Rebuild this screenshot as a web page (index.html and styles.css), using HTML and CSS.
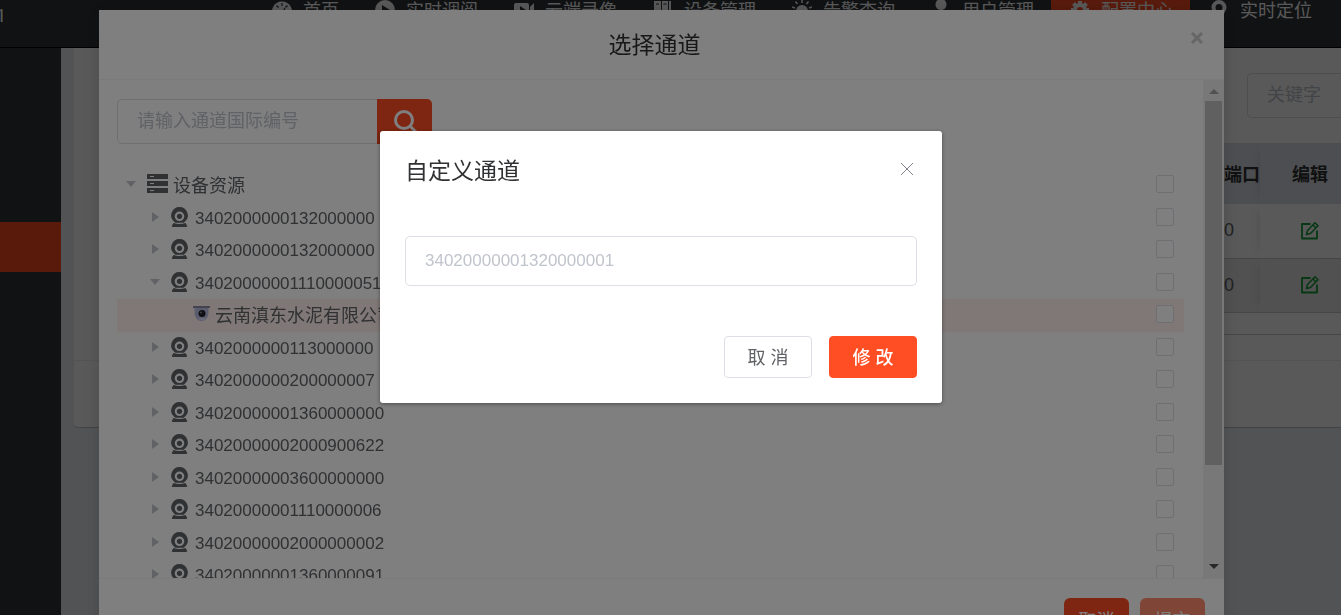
FILE: index.html
```html
<!DOCTYPE html>
<html lang="zh-CN">
  <head>
    <meta charset="UTF-8" />
    <meta name="viewport" content="width=device-width, initial-scale=1.0" />
    <title>配置中心</title>
    <link rel="stylesheet" href="styles.css">
  </head>
  <body>
    <svg class="sprite" aria-hidden="true">
      <symbol id="webcam" viewBox="0 0 17 20">
        <path fill-rule="evenodd" d="M8.500 0a8.300 8.300 0 0 1 5 14.900l-.8.900H4.300l-.8-.9A8.300 8.300 0 0 1 8.500 0zm0 4.500a4.800 4.800 0 1 0 0 9.600 4.800 4.800 0 0 0 0-9.600z" />
        <circle cx="8.500" cy="9.300" r="2.600" />
        <path d="M2.500 16c4 1.200 8 1.200 12 0l1.500 2.600c.4.800 0 1.400-.8 1.400H1.800c-.8 0-1.200-.6-.8-1.400z" />
      </symbol>
      <symbol id="edit" viewBox="0 0 20 20">
        <path d="M10.500 3H2v14.500h15V9.500" fill="none" stroke="currentColor" stroke-width="1.800" stroke-linejoin="round" />
        <path d="M6.500 13.500l1-4 7.500-7.700 3 3-7.500 7.700z M13 4l3 3" fill="none" stroke="currentColor" stroke-width="1.600" stroke-linejoin="round" />
      </symbol>
    </svg>

    <header class="header">
      <span class="logo">1</span>
      <nav class="nav">
        <a href="#">
          <svg viewBox="0 0 20 20"><path d="M10 1.500a10 10 0 0 0-8 16h16a10 10 0 0 0-8-16z" /><path d="M10 3v3M4.500 5.500l2 2M15.500 5.500l-2 2M10 13l3-5M2 11h2.500M15.500 11H18" stroke="#2f3439" stroke-width="1.200" /></svg>
          首页
        </a>
        <a href="#">
          <svg viewBox="0 0 20 20"><circle cx="10" cy="10" r="10" /><path d="M7 5l8 5-8 5z" fill="#2f3439" /></svg>
          实时调阅
        </a>
        <a href="#">
          <svg viewBox="0 0 20 20"><rect y="3" width="15" height="14" rx="2" /><path d="M16 7l4-4v13l-4-4z" /><path d="M6 6l6 4-6 4z" fill="#2f3439" /></svg>
          云端录像
        </a>
        <a href="#">
          <svg viewBox="0 0 20 20"><path d="M1 1h7v18H1zM9 1h6v18H9zM16 1h2v18h-2z" /><path d="M3 4h3M10.500 4h3" stroke="#2f3439" stroke-width="1.200" /></svg>
          设备管理
        </a>
        <a href="#">
          <svg viewBox="0 0 20 20"><path d="M4 17v-6a6 6 0 0 1 12 0v6z" /><path d="M10 0v3M3.500 1.500l2 2.500M16.500 1.500l-2 2.500M0 7l3 1M20 7l-3 1" stroke="#fff" stroke-width="1.500" /></svg>
          告警查询
        </a>
        <a href="#">
          <svg viewBox="0 0 20 20"><circle cx="10" cy="4.500" r="5.500" /><path d="M2 20c0-7 3-10 8-10s8 3 8 10z" /></svg>
          用户管理
        </a>
        <a href="#" class="active">
          <svg viewBox="0 0 20 20"><circle cx="10" cy="10" r="5" fill="none" stroke="#fff" stroke-width="4" /><path d="M10 1v4M10 15v4M1 10h4M15 10h4M3.500 3.500l3 3M16.500 3.500l-3 3M3.500 16.500l3-3M16.500 16.500l-3-3" stroke="#fff" stroke-width="4" /></svg>
          配置中心
        </a>
        <a href="#">
          <svg viewBox="0 0 20 20"><path fill-rule="evenodd" d="M10 0a7.500 7.500 0 0 1 7.500 7.500C17.500 12 10 20 10 20S2.500 12 2.500 7.500A7.500 7.500 0 0 1 10 0zm0 4a3.500 3.500 0 1 0 0 7 3.500 3.500 0 0 0 0-7z" /></svg>
          实时定位
        </a>
      </nav>
    </header>

    <div class="main">
      <aside class="sidebar">
        <a href="#" class="side-active" aria-label="配置中心"></a>
      </aside>
      <section class="content">
        <div class="card">
          <div class="toolbar">
            <input type="text" class="keyword" placeholder="关键字" aria-label="关键字" />
          </div>
          <div class="card-body">
            <table class="list">
              <thead>
                <tr><th></th><th class="port">服务端口</th><th class="op">编辑</th></tr>
              </thead>
              <tbody>
                <tr>
                  <td></td><td class="port">80</td>
                  <td class="op"><button type="button" class="edit" aria-label="编辑"><svg><use href="#edit" /></svg></button></td>
                </tr>
                <tr class="striped">
                  <td></td><td class="port">80</td>
                  <td class="op"><button type="button" class="edit" aria-label="编辑"><svg><use href="#edit" /></svg></button></td>
                </tr>
              </tbody>
            </table>
            <div class="table-foot"></div>
          </div>
          <div class="card-foot"></div>
        </div>
      </section>
    </div>

    <!-- channel picker -->
    <div class="backdrop">
      <div class="modal">
        <div class="modal-header">
          <h4>选择通道</h4>
          <button type="button" class="modal-close" aria-label="关闭">
            <svg viewBox="0 0 14 14"><path d="M2 2l10 10M12 2L2 12" /></svg>
          </button>
        </div>
        <div class="modal-body">
          <div class="scroll">
            <form class="search">
              <input type="text" placeholder="请输入通道国际编号" aria-label="通道国际编号" />
              <button type="button" aria-label="搜索">
                <svg viewBox="0 0 24 24"><circle cx="11" cy="10" r="8.500" /><path d="M17 16l6 6" /></svg>
              </button>
            </form>
            <div class="tree">
              <div class="node root">
                <i class="caret open"></i>
                <svg class="server" viewBox="0 0 21 20"><path d="M0 0h21v5H0zM0 7h21v5H0zM0 14h21v5H0z" /><path d="M3 2.500h4M3 9.500h4M3 16.500h4" stroke="#fff" /></svg>
                <label for="n0">设备资源</label>
                <input type="checkbox" id="n0" />
              </div>
              <div class="node">
                <i class="caret"></i><svg class="cam"><use href="#webcam" /></svg>
                <label for="n1">3402000000132000000</label>
                <input type="checkbox" id="n1" />
              </div>
              <div class="node">
                <i class="caret"></i><svg class="cam"><use href="#webcam" /></svg>
                <label for="n2">3402000000132000000</label>
                <input type="checkbox" id="n2" />
              </div>
              <div class="node">
                <i class="caret open"></i><svg class="cam"><use href="#webcam" /></svg>
                <label for="n3">34020000001110000051</label>
                <input type="checkbox" id="n3" />
              </div>
              <div class="node leaf">
                <svg class="dome" viewBox="0 0 17 16"><path d="M1.500 2h14v5a7 8 0 0 1-14 0z" fill="#b6bbdc" /><path d="M0 0h17v2H0z" fill="#85889f" /><circle cx="9" cy="7.500" r="3.500" fill="#1c1d26" /><circle cx="8" cy="6.500" r="1" fill="#889" /><path d="M6 13h6" stroke="#eef" /></svg>
                <label for="n4">云南滇东水泥有限公司</label>
                <input type="checkbox" id="n4" />
              </div>
              <div class="node">
                <i class="caret"></i><svg class="cam"><use href="#webcam" /></svg>
                <label for="n5">3402000000113000000</label>
                <input type="checkbox" id="n5" />
              </div>
              <div class="node">
                <i class="caret"></i><svg class="cam"><use href="#webcam" /></svg>
                <label for="n6">3402000000200000007</label>
                <input type="checkbox" id="n6" />
              </div>
              <div class="node">
                <i class="caret"></i><svg class="cam"><use href="#webcam" /></svg>
                <label for="n7">34020000001360000000</label>
                <input type="checkbox" id="n7" />
              </div>
              <div class="node">
                <i class="caret"></i><svg class="cam"><use href="#webcam" /></svg>
                <label for="n8">34020000002000900622</label>
                <input type="checkbox" id="n8" />
              </div>
              <div class="node">
                <i class="caret"></i><svg class="cam"><use href="#webcam" /></svg>
                <label for="n9">34020000003600000000</label>
                <input type="checkbox" id="n9" />
              </div>
              <div class="node">
                <i class="caret"></i><svg class="cam"><use href="#webcam" /></svg>
                <label for="n10">34020000001110000006</label>
                <input type="checkbox" id="n10" />
              </div>
              <div class="node">
                <i class="caret"></i><svg class="cam"><use href="#webcam" /></svg>
                <label for="n11">34020000002000000002</label>
                <input type="checkbox" id="n11" />
              </div>
              <div class="node">
                <i class="caret"></i><svg class="cam"><use href="#webcam" /></svg>
                <label for="n12">34020000001360000091</label>
                <input type="checkbox" id="n12" />
              </div>
            </div>
          </div>
          <div class="scrollbar">
            <svg viewBox="0 0 21 21"><path d="M6 14l5-5 5 5z" /></svg>
            <div class="thumb"></div>
            <svg viewBox="0 0 21 21" class="down"><path d="M6 7l5 5 5-5z" /></svg>
          </div>
        </div>
        <div class="modal-footer">
          <button type="button">取消</button>
          <button type="button" disabled>提交</button>
        </div>
      </div>
    </div>

    <!-- custom channel dialog -->
    <div class="mask">
      <form class="dialog">
        <div class="dialog-header">
          <h4>自定义通道</h4>
          <button type="button" class="dialog-close" aria-label="关闭">
            <svg viewBox="0 0 14 14"><path d="M1 1l12 12M13 1L1 13" /></svg>
          </button>
        </div>
        <input type="text" placeholder="34020000001320000001" aria-label="自定义通道编号" />
        <div class="dialog-footer">
          <button type="button">取 消</button>
          <button type="button" class="primary">修 改</button>
        </div>
      </form>
    </div>
  </body>
</html>
```
FILE: styles.css
```css
* {
  box-sizing: border-box;
}

body {
  margin: 0;
  height: 100vh;
  overflow: hidden;
  display: flex;
  flex-direction: column;
  background-color: #ecf0f5;
  color: #606266;
  font-family: "Liberation Sans", "Noto Sans CJK SC", sans-serif;
  font-size: 18px;
}

h4 {
  margin: 0;
  font-size: 23px;
  font-weight: 400;
  color: #303133;
}

button,
input {
  font-family: inherit;
  font-size: 18px;
}

button {
  padding: 0;
  border: none;
  background: none;
  cursor: pointer;
}

.sprite {
  display: none;
}

/* header */
.header {
  display: flex;
  justify-content: space-between;
  height: 48px;
  padding-right: 12px;
  background-color: #2f3439;
  border-bottom: 1px solid #000;
  color: #fff;
}

.logo {
  margin-left: -4px;
  padding-top: 5px;
  font-family: Roboto, sans-serif;
}

.nav {
  display: flex;
}

.nav a {
  display: flex;
  gap: 11px;
  height: 30px;
  padding: 0 17px 0 19px;
  line-height: 22px;
  color: #fff;
  text-decoration: none;
  white-space: nowrap;
}

.nav a.active {
  background-color: #ff4d24;
}

.nav svg {
  width: 20px;
  height: 20px;
  fill: #fff;
}

/* page */
.main {
  flex: 1;
  display: flex;
}

.sidebar {
  width: 61px;
  padding-top: 174px;
  background-color: #2f3439;
}

.side-active {
  display: block;
  height: 50px;
  background-color: #ff4d24;
}

.content {
  flex: 1;
  padding-left: 13px;
}

.card {
  background-color: #fff;
  border-radius: 0 0 0 4px;
  box-shadow: 0 1px 1px rgba(0, 0, 0, 0.2);
}

.toolbar {
  display: flex;
  justify-content: flex-end;
  padding: 25px 0;
}

.keyword {
  width: 94px;
  height: 45px;
  padding: 0 19px;
  border: 1px solid #dcdfe6;
  border-right: none;
  border-radius: 5px 0 0 5px;
  background: none;
}

.keyword::placeholder {
  color: #c0c4cc;
}

.card-body {
  padding: 0 0 25px 38px;
}

.list {
  width: 100%;
  border-collapse: collapse;
  border-top: 2px solid #dcdfe6;
}

.list th {
  height: 60px;
  padding: 0 0 4px;
  background-color: #dde1e8;
  color: #303133;
}

.list td {
  height: 54px;
  padding: 0;
  border-bottom: 1px solid #c8cad0;
}

.list .striped {
  background-color: #e8e8e8;
}

.list .port {
  width: 72px;
  text-align: center;
}

.list .op {
  width: 81px;
  padding-left: 32px;
  text-align: left;
  box-shadow: -8px 0 10px -8px rgba(0, 0, 0, 0.12);
}

.list td.op {
  padding-left: 40px;
}

.edit {
  display: flex;
  color: #18a03a;
}

.edit svg {
  width: 20px;
  height: 20px;
}

.table-foot {
  height: 22px;
  border-bottom: 1px solid #c8cad0;
}

.card-foot {
  height: 67px;
  border-top: 1px solid #f0f0f0;
}

/* channel picker */
.backdrop,
.mask {
  position: fixed;
  inset: 0;
  overflow: hidden;
  display: flex;
  justify-content: center;
  align-items: flex-start;
}

.backdrop {
  padding: 10px 18px 0 0;
  background-color: rgba(0, 0, 0, 0.3);
}

.modal {
  width: 100%;
  max-width: 1125px;
  background-color: #fff;
  box-shadow: 0 2px 16px rgba(0, 0, 0, 0.15);
}

.modal-header {
  display: flex;
  height: 70px;
  padding: 0 20px;
  border-bottom: 1px solid #f4f4f4;
}

.modal-header h4 {
  flex: 1;
  line-height: 70px;
  text-align: center;
}

.modal-close {
  display: flex;
  height: 14px;
  margin-top: 21px;
}

.modal-close svg {
  width: 14px;
  height: 14px;
  stroke: #ccc;
  stroke-width: 3;
}

.modal-body {
  display: flex;
  height: calc(100vh - 117px);
}

.scroll {
  flex: 1;
  overflow: hidden;
  padding: 19px 19px 0 18px;
}

.search {
  display: flex;
  margin-bottom: 25px;
}

.search input {
  width: 260px;
  height: 45px;
  padding: 0 19px;
  border: 1px solid #dcdfe6;
  border-right: none;
  border-radius: 5px 0 0 5px;
}

.search input::placeholder {
  color: #c0c4cc;
}

.search button {
  display: flex;
  justify-content: center;
  align-items: center;
  width: 55px;
  height: 45px;
  border-radius: 0 5px 5px 0;
  background-color: #ff4d24;
}

.search svg {
  width: 24px;
  height: 24px;
  fill: none;
  stroke: #fff;
  stroke-width: 3;
}

.tree {
  display: grid;
  grid-auto-rows: 33px 32px;
}

.node {
  display: flex;
  align-items: center;
  padding: 0 10px 3px 32px;
}

.root {
  padding-left: 8px;
}

.leaf {
  padding-left: 76px;
  background-color: #fff0ec;
}

.node label {
  flex: 1;
  padding: 4px 0 0 7px;
  font-size: 17px;
}

.root label,
.leaf label {
  padding: 0 0 0 5px;
  font-size: 18px;
}

.caret {
  display: flex;
  justify-content: center;
  width: 12px;
  margin-right: 10px;
}

.caret::before {
  content: "";
  border: 5px solid transparent;
  border-left: 7px solid #c0c4cc;
  border-right: none;
}

.caret.open::before {
  border: 5px solid transparent;
  border-top: 6px solid #c0c4cc;
  border-bottom: none;
}

.node svg {
  fill: #606266;
}

.cam {
  width: 17px;
  height: 20px;
}

.server {
  width: 21px;
  height: 20px;
}

.dome {
  width: 17px;
  height: 16px;
}

.node input {
  appearance: none;
  width: 18px;
  height: 18px;
  margin: 0;
  border: 1px solid #dcdfe6;
  border-radius: 2px;
  background-color: #fff;
}

.scrollbar {
  display: flex;
  flex-direction: column;
  width: 21px;
  background-color: #f1f1f1;
}

.scrollbar svg {
  width: 21px;
  height: 21px;
  fill: #a3a3a3;
}

.scrollbar .down {
  margin-top: auto;
  fill: #505050;
}

.thumb {
  height: 73%;
  margin: 0 2px;
  background-color: #c1c1c1;
}

.modal-footer {
  display: flex;
  justify-content: flex-end;
  gap: 11px;
  padding: 19px;
  border-top: 1px solid #f4f4f4;
}

.modal-footer button {
  width: 65px;
  height: 42px;
  border-radius: 6px;
  background-color: #ff4d24;
  color: #fff;
}

.modal-footer button:disabled {
  opacity: 0.65;
}

/* custom channel dialog */
.mask {
  padding: 131px 19px 0 0;
  background-color: rgba(0, 0, 0, 0.5);
}

.dialog {
  width: 562px;
  padding: 25px;
  border-radius: 3px;
  background-color: #fff;
  box-shadow: 0 1px 4px rgba(0, 0, 0, 0.4);
}

.dialog-header {
  display: flex;
  justify-content: space-between;
  align-items: center;
  height: 25px;
  margin-bottom: 55px;
}

.dialog-close {
  display: flex;
  margin-right: 3px;
}

.dialog-close svg {
  width: 14px;
  height: 14px;
  stroke: #80838a;
}

.dialog input {
  display: block;
  width: 100%;
  height: 50px;
  padding: 0 19px;
  border: 1px solid #dcdfe6;
  border-radius: 5px;
  font-size: 17px;
}

.dialog input::placeholder {
  color: #c0c4cc;
}

.dialog-footer {
  display: flex;
  justify-content: flex-end;
  gap: 17px;
  margin-top: 50px;
}

.dialog-footer button {
  width: 88px;
  height: 42px;
  padding-bottom: 3px;
  border: 1px solid #dcdfe6;
  border-radius: 4px;
  color: #606266;
}

.dialog-footer .primary {
  border-color: #ff4d24;
  background-color: #ff4d24;
  color: #fff;
  font-weight: 500;
}
```
